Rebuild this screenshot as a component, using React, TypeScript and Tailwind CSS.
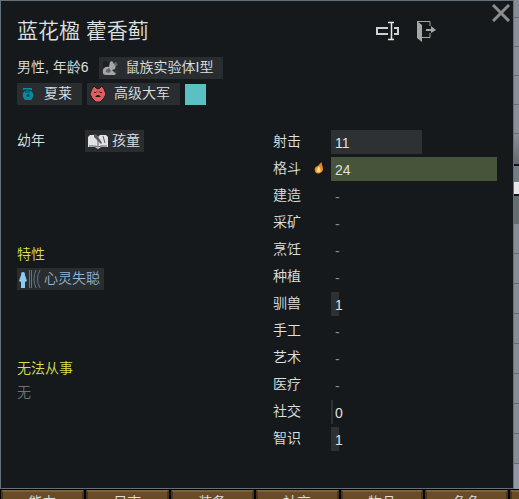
import type { ReactNode } from "react";

type Skill = { name: string; level: number | null; passion?: boolean };

const MAX_LEVEL = 20;

const skills: Skill[] = [
  { name: "射击", level: 11 },
  { name: "格斗", level: 24, passion: true },
  { name: "建造", level: null },
  { name: "采矿", level: null },
  { name: "烹饪", level: null },
  { name: "种植", level: null },
  { name: "驯兽", level: 1 },
  { name: "手工", level: null },
  { name: "艺术", level: null },
  { name: "医疗", level: null },
  { name: "社交", level: 0 },
  { name: "智识", level: 1 },
];

const tabs = ["能力", "日志", "装备", "社交", "物品", "角色"];

function barWidth(level: number) {
  return `${Math.max(1, Math.min(100, (level / MAX_LEVEL) * 100))}%`;
}

function CloseIcon() {
  return (
    <svg viewBox="0 0 18 18" className="size-[18px]">
      <path d="M1 1l16 16M17 1L1 17" stroke="#8b8d8f" strokeWidth="3" />
    </svg>
  );
}

function RatIcon() {
  return (
    <svg viewBox="0 0 18 18" className="size-[18px] shrink-0">
      <path d="M2 3l3-1 3 2v3l-3 3-3-2z" fill="#1d1f23" />
      <path d="M2 14c-1-4 2-7 6-6l1-5 2-1 2 3 2 1-1 4-3 1 2 2 2 1-1 2H5c-2 0-3-1-3-2z" fill="#a5a6a8" />
      <path d="M13 4l2-1 2 3-3 1z" fill="#65676a" />
      <path d="M5 11l3-2 2 3-2 2-3-1z" fill="#626468" />
      <path d="M13 12l4-1v2l-3 1z" fill="#37393d" />
    </svg>
  );
}

function PotIcon() {
  return (
    <svg viewBox="0 0 18 18" className="size-[18px] shrink-0">
      <path d="M4 3h9v2h-3v1h2c3 2 3 6 0 9H6c-3-3-3-7 0-9h1V5H4z" fill="#078ba0" />
      <path d="M5 5h7M6 7h5" stroke="#06414d" />
      <circle cx="9" cy="10.500" r="1.500" fill="#06414d" />
    </svg>
  );
}

function FactionIcon() {
  return (
    <svg viewBox="0 0 18 18" className="size-[18px] shrink-0">
      <path
        d="M5 1l2 2 2 1 2-1 2-2 2 3 2 5-2 4-4 4H7l-4-4-2-4 2-5z"
        fill="#df6060"
        stroke="#241719"
      />
      <path d="M5 7.500h2l1-1M13 7.500h-2l-1-1" stroke="#241719" fill="none" />
      <path d="M6 12l2-2h2l2 2z" fill="#241719" />
    </svg>
  );
}

function BookIcon() {
  return (
    <svg viewBox="0 0 22 18" className="h-[18px] w-[22px] shrink-0">
      <path d="M1 5l2-2h6l2 2 2-2h6l2 2v10h-7l-3 2-3-2H1z" fill="#e2e2e2" />
      <path d="M7 2l3 1 5 8-1 1-3-3-4-4z" fill="#5a5c5f" />
      <path d="M16 4l2 7M2 14h6l3 1 3-1h6M11 8v6" stroke="#5a5c5f" fill="none" />
    </svg>
  );
}

function PsychicIcon() {
  return (
    <svg viewBox="0 0 22 20" className="h-5 w-[22px] shrink-0">
      <circle cx="4" cy="5" r="2" fill="#8ecbf1" />
      <path d="M2 6h4l2 6-2 1v6H2v-6l-2-1z" fill="#8ecbf1" />
      <path
        d="M10.500 1v18M12.500 1v18M17 1q-4 9 0 18M21 1q-5 9 0 18"
        fill="none"
        stroke="#5f7587"
      />
    </svg>
  );
}

function RenameIcon() {
  return (
    <svg viewBox="0 0 24 20" className="h-5 w-6" fill="none">
      <path d="M12 7H1v6h11M18 7h4v6h-4" stroke="#cfd0cf" strokeWidth="2" />
      <path d="M12 1.500h6M12 18.500h6M15.500 1v17" stroke="#e6e7e6" strokeWidth="1.500" />
    </svg>
  );
}

function ExitIcon() {
  return (
    <svg viewBox="0 0 20 22" className="h-[22px] w-5" fill="none">
      <path d="M1 1l5 4v17l-5-4z" fill="#a6a7a7" />
      <path d="M1 1.500h13V6M14 13v4.500H6" stroke="#a6a7a7" />
      <path d="M10 9h5V6l5 4-5 3v-2h-5z" fill="#a6a7a7" />
    </svg>
  );
}

function FlameIcon() {
  return (
    <svg viewBox="0 0 10 12" className="h-3 w-2.5">
      <path d="M8 0c-1 2 1 4 1 7 0 5-8 6-8 2-1-3 1-5 3-5 1-1 2-3 4-4z" fill="#e78931" />
      <path d="M5 4c0 2 3 3 1 6-3 1-4-1-3-3z" fill="#ffe36d" />
    </svg>
  );
}

function Chip({ icon, children, className = "" }: { icon: ReactNode; children: ReactNode; className?: string }) {
  return (
    <button className={`flex h-[22px] items-center bg-[#2a2d30] text-left whitespace-nowrap ${className}`}>
      {icon}
      <span className="-mt-0.5">{children}</span>
    </button>
  );
}

function SkillRow({ skill }: { skill: Skill }) {
  const { name, level, passion } = skill;
  return (
    <li className="flex h-6 items-center">
      <span className="w-10 shrink-0 pb-0.5">{name}</span>
      <span className="flex w-[18px] shrink-0 pb-0.5 pl-px">{passion ? <FlameIcon /> : null}</span>
      <div className="relative flex h-6 flex-1 items-center">
        {level !== null ? (
          <div
            className={`absolute inset-y-0 left-0 ${passion ? "bg-[#465439]" : "bg-[#2e3134]"}`}
            style={{ width: barWidth(level) }}
          />
        ) : null}
        <span className={`relative pt-0.5 pl-1 ${level === null ? "text-[#8b8e90]" : ""}`}>
          {level ?? "-"}
        </span>
      </div>
    </li>
  );
}

// Sliver of the map's stone floor beside the panel
function StoneEdge() {
  return (
    <div className="flex w-[5px] shrink-0 flex-col bg-[#858d96]">
      <div className="h-[18px] border-b border-[#656c74]" />
      {[0, 1, 2, 3].map((i) => (
        <div key={i} className="h-[29px] border-b border-[#656c74] bg-[#8a8f9b]" />
      ))}
      <div className="h-8 border-b-2 border-[#111519] bg-linear-to-b from-[#8a8f9b] to-[#636b70]" />
      <div className="h-4 bg-[#737e83]" />
      <div className="h-3 bg-[#e6e8eb]" />
      <div className="h-[30px] border-t-2 border-b border-t-[#111519] border-b-[#656c74] bg-[#646e70]" />
      {[0, 1, 2, 3, 4, 5, 6, 7].map((i) => (
        <div key={i} className="h-[30px] border-b border-[#656c74]" />
      ))}
      <div className="flex-1 bg-[#9297a5]" />
    </div>
  );
}

export default function App() {
  return (
    <div className="h-screen overflow-hidden bg-black font-['Liberation_Sans','Noto_Sans_CJK_SC',sans-serif] text-sm leading-5 font-[350] text-[#dfe0e0]">
      <div className="flex">
        <main className="relative min-w-0 flex-1 border border-[#667079] bg-[#15191c] px-4 pt-4 pb-[37px]">
          <button aria-label="关闭" className="absolute top-0 right-0 p-[3px]">
            <CloseIcon />
          </button>

          <header className="flex h-7 items-center">
            <h1 className="flex-1 text-[21px] leading-7 font-[350]">蓝花楹 藿香蓟</h1>
            <div className="mr-[61px] flex items-center gap-4">
              <button aria-label="重命名"><RenameIcon /></button>
              <button aria-label="驱逐"><ExitIcon /></button>
            </div>
          </header>

          <section className="mt-3 flex flex-col gap-1">
            <div className="flex items-center gap-2.5">
              <span className="-mt-0.5">男性, 年龄6</span>
              <Chip icon={<RatIcon />} className="gap-[7px] pr-2.5 pl-0.5">鼠族实验体I型</Chip>
            </div>
            <div className="flex items-center gap-[5px]">
              <Chip icon={<PotIcon />} className="gap-[7px] pr-2.5 pl-0.5">夏莱</Chip>
              <Chip icon={<FactionIcon />} className="gap-[7px] pr-2.5 pl-0.5">高级大军</Chip>
              <button aria-label="颜色" className="size-[21px] bg-[#5ac0c1]" />
            </div>
          </section>

          <div className="mt-[25px] flex">
            <div className="flex w-1/2 shrink-0 flex-col">
              <div className="flex h-[22px] items-center">
                <span className="-mt-0.5 w-[68px]">幼年</span>
                <Chip icon={<BookIcon />} className="gap-[3px] pr-1 pl-0.5">孩童</Chip>
              </div>
              <section className="mt-[92px]">
                <h2 className="font-[350] text-[#d9df50]">特性</h2>
                <Chip icon={<PsychicIcon />} className="mt-1 gap-[3px] pr-1 pl-0.5 text-[#91b5d2]">心灵失聪</Chip>
              </section>
              <section className="mt-[68px]">
                <h2 className="font-[350] text-[#d9df50]">无法从事</h2>
                <p className="mt-1 text-[#707376]">无</p>
              </section>
            </div>
            <ul className="ml-4 flex flex-1 flex-col gap-[3px]">
              {skills.map((skill) => (
                <SkillRow key={skill.name} skill={skill} />
              ))}
            </ul>
          </div>
        </main>
        <StoneEdge />
      </div>
      <nav className="flex pt-px pl-px">
        {tabs.map((tab) => (
          <button
            key={tab}
            className="mr-0.5 h-6 w-[16%] shrink-0 border-2 border-[#49351d] border-t-[#806137] bg-[#694b25] text-sm leading-5"
          >
            {tab}
          </button>
        ))}
        <div className="h-6 flex-1 border-2 border-r-0 border-[#49351d] border-t-[#806137] bg-[#694b25]" />
      </nav>
    </div>
  );
}
